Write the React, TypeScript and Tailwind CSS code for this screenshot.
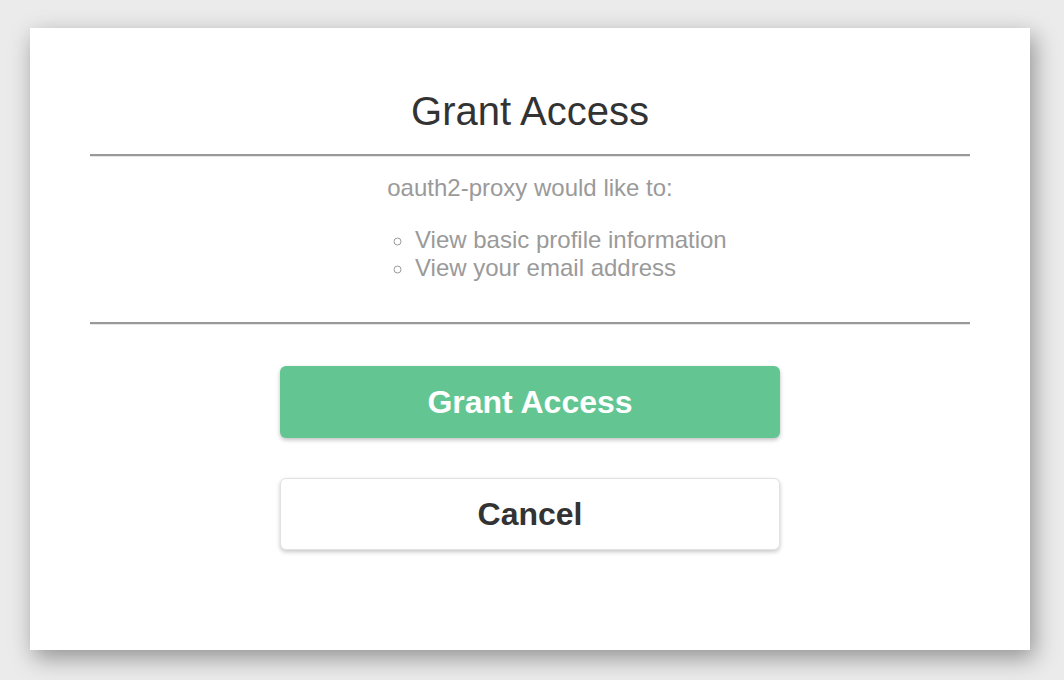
export default function App() {
  return (
    <div
      className="w-[1064px] h-[680px] bg-[#ebebeb] pt-[28px] pl-[30px]"
      style={{ fontFamily: '"Liberation Sans", Arial, Helvetica, sans-serif' }}
    >
      <div className="w-[1000px] h-[622px] bg-white shadow-[4px_8px_22px_rgba(0,0,0,0.38)] px-[60px] pt-[60px] flex flex-col">
        <h1 className="text-center text-[40px] leading-[46px] text-[#333]">Grant Access</h1>

        <hr className="mt-[20px] border-0 border-t-2 border-t-[#999] border-b border-b-[#e6e6e6]" />

        <p className="mt-[17px] text-center text-[24px] leading-[28px] text-[#9a9a9a]">
          oauth2-proxy would like to:
        </p>
        <ul className="mt-[24px] pl-[325px] list-[circle] text-[24px] leading-[28px] text-[#9a9a9a]">
          <li>View basic profile information</li>
          <li>View your email address</li>
        </ul>

        <hr className="mt-[40px] border-0 border-t-2 border-t-[#999] border-b border-b-[#e6e6e6]" />

        <div className="mt-[41px] flex flex-col items-center gap-[40px]">
          <button className="w-[500px] h-[72px] rounded-[6px] bg-[#63c692] text-white font-bold text-[32px] shadow-[0_2px_4px_rgba(0,0,0,0.25)]">
            Grant Access
          </button>
          <button className="w-[500px] h-[72px] rounded-[6px] bg-white border border-[#e2e2e2] text-[#333] font-bold text-[32px] shadow-[0_2px_4px_rgba(0,0,0,0.22)]">
            Cancel
          </button>
        </div>
      </div>
    </div>
  );
}
